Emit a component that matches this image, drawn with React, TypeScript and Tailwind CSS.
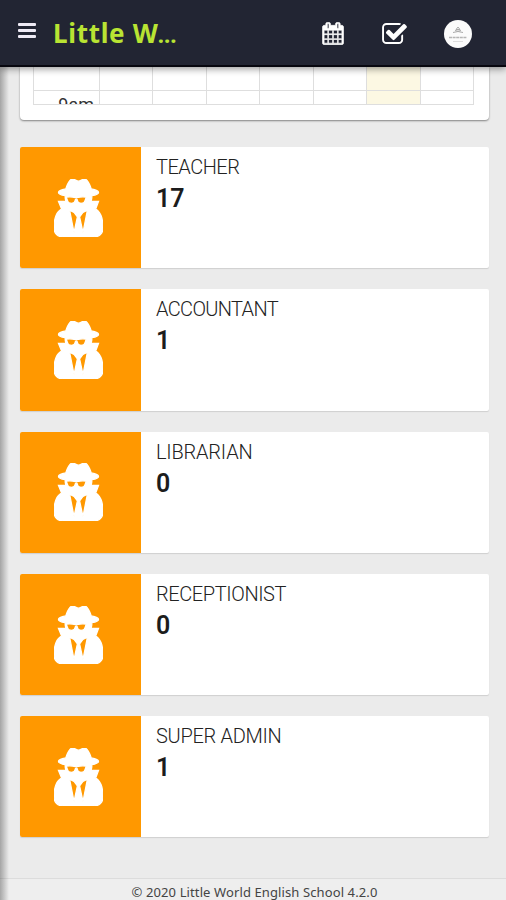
const stats = [
  { label: 'TEACHER', value: 17, tracking: 'tracking-[-0.5px]' },
  { label: 'ACCOUNTANT', value: 1, tracking: 'tracking-[-0.65px]' },
  { label: 'LIBRARIAN', value: 0, tracking: 'tracking-[-0.2px]' },
  { label: 'RECEPTIONIST', value: 0, tracking: 'tracking-[-0.4px]' },
  { label: 'SUPER ADMIN', value: 1, tracking: 'tracking-[-0.3px]' },
];

// all-day column first, then Sun–Sat; index 6 is today
const columns = [0, 1, 2, 3, 4, 5, 6, 7];
const today = 6;

function CalendarIcon() {
  return (
    <svg
      viewBox="44 -10 1704 1822"
      width="22"
      height="23"
      fill="currentColor"
      stroke="currentColor"
      strokeWidth="50"
      aria-hidden="true"
    >
      <path d="M192 1664h288v-288h-288v288zm352 0h320v-288h-320v288zm-352-352h288v-320h-288v320zm352 0h320v-320h-320v320zm-352-384h288v-288h-288v288zm736 736h320v-288h-320v288zm-384-736h320v-288h-320v288zm768 736h288v-288h-288v288zm-384-352h320v-320h-320v320zm-352-864v-288q0-13-9.5-22.5t-22.5-9.5h-64q-13 0-22.5 9.5t-9.5 22.5v288q0 13 9.5 22.5t22.5 9.5h64q13 0 22.5-9.5t9.5-22.5zm736 864h288v-320h-288v320zm-384-384h320v-288h-320v288zm384 0h288v-288h-288v288zm32-480v-288q0-13-9.5-22.5t-22.5-9.5h-64q-13 0-22.5 9.5t-9.5 22.5v288q0 13 9.5 22.5t22.5 9.5h64q13 0 22.5-9.5t9.5-22.5zm384-64v1280q0 52-38 90t-90 38h-1408q-52 0-90-38t-38-90v-1280q0-52 38-90t90-38h128v-96q0-66 47-113t113-47h64q66 0 113 47t47 113v96h384v-96q0-66 47-113t113-47h64q66 0 113 47t47 113v96h128q52 0 90 38t38 90z" />
    </svg>
  );
}

function CheckIcon() {
  return (
    <svg viewBox="64 128 1663 1408" width="25" height="21" fill="currentColor" aria-hidden="true">
      <path d="M1472 930v318q0 119-84.5 203.5t-203.5 84.5h-832q-119 0-203.5-84.5t-84.5-203.5v-832q0-119 84.5-203.5t203.5-84.5h832q63 0 117 25 15 7 18 23 3 17-9 29l-49 49q-10 10-23 10-3 0-9-2-23-6-45-6h-832q-66 0-113 47t-47 113v832q0 66 47 113t113 47h832q66 0 113-47t47-113v-254q0-13 9-22l64-64q10-10 23-10 6 0 12 3 20 8 20 29zm231-489l-814 814q-24 24-57 24t-57-24l-430-430q-24-24-24-57t24-57l110-110q24-24 57-24t57 24l263 263 647-647q24-24 57-24t57 24l110 110q24 24 24 57t-24 57z" />
    </svg>
  );
}

function SecretIcon() {
  return (
    <svg viewBox="256 0 1408 1664" width="49" height="58" fill="currentColor" aria-hidden="true">
      <path d="M832 1536l96-448-96-128-128-64zm256 0l128-640-128 64-96 128zm96-1010q-2-4-4-6-10-8-96-8-70 0-167 19-7 2-21 2t-21-2q-97-19-167-19-86 0-96 8-2 2-4 6 2 18 4 27 2 3 7.5 6.5t7.5 10.5q2 4 7.5 20.5t7 20.5 7.5 17 8.5 17 9 14 12 13.5 14 9.5 17.5 8 20.5 4 24.5 2q36 0 59-12.5t32.5-30 14.5-34.5 11.5-29.5 17.5-12.5h12q11 0 17.5 12.5t11.5 29.5 14.5 34.5 32.5 30 59 12.5q13 0 24.5-2t20.5-4 17.5-8 14-9.5 12-13.5 9-14 8.5-17 7.5-17 7-20.5 7.5-20.5q2-7 7.5-10.5t7.5-6.5q2-9 4-27zm480 879q0 121-73 190t-194 69h-874q-121 0-194-69t-73-190q0-61 4.5-118t19-125.5 37.5-123.5 63.5-103.5 93.5-74.5l-90-220h214q-22-64-22-128 0-12 2-32-194-40-194-96 0-57 210-99 17-62 51.5-134t70.5-114q32-37 76-37 30 0 84 31t84 31 84-31 84-31q44 0 76 37 36 42 70.5 114t51.5 134q210 42 210 99 0 56-194 96 7 81-20 160h214l-82 225q63 33 107.5 96.5t65.5 143.5 29 151.5 8 148.5z" stroke="currentColor" strokeWidth="36" />
    </svg>
  );
}

function Avatar() {
  return (
    <svg viewBox="0 0 28 28" width="28" height="28" aria-hidden="true">
      <circle cx="14" cy="14" r="14" fill="#fbfbfb" />
      <path d="M9 12.500q5-2 10 0M11 10.500q3 1.500 6 0M14 7l-2 2.500h4z" fill="none" stroke="#aaa" strokeWidth="1" />
      <path d="M5 17.500h18" stroke="#b5b5b5" strokeWidth="1.300" strokeDasharray="3 .6" />
      <path d="M9 21.500h10" stroke="#ddd" strokeWidth="1" />
    </svg>
  );
}

export default function App() {
  return (
    <div className="relative flex h-[900px] w-full max-w-[506px] flex-col overflow-hidden bg-[#ebebeb] font-['Roboto',sans-serif]">
      {/* Top bar */}
      <header className="z-10 flex h-[67px] shrink-0 items-start border-b-2 border-[#07070f] bg-[#222533] text-white shadow-[0_2px_7px_rgba(0,0,0,0.4)]">
        <button className="mt-[23px] ml-[18px] flex w-[18px] flex-col gap-[3px]" aria-label="Menu">
          <span className="h-[3px] w-full rounded-[1px] bg-[#eeeaf5]" />
          <span className="h-[3px] w-full rounded-[1px] bg-[#eeeaf5]" />
          <span className="h-[3px] w-full rounded-[1px] bg-[#eeeaf5]" />
        </button>
        <h1 className="mt-[15px] ml-[17px] w-[150px] font-['Noto_Sans',sans-serif] text-[26px] leading-[36px] font-bold tracking-[0.7px] whitespace-nowrap text-[#b9e433]">
          Little W<span className="-ml-px text-[22px] tracking-normal">…</span>
        </h1>
        <div className="mt-[22px] ml-[119px]">
          <CalendarIcon />
        </div>
        <div className="mt-[23px] ml-[38px]">
          <CheckIcon />
        </div>
        <div className="mt-[20px] ml-[37px]">
          <Avatar />
        </div>
      </header>

      {/* Bottom of the calendar card, scrolled under the bar */}
      <section className="mr-[17px] ml-5 h-[53px] shrink-0 rounded-b-[4px] bg-white pr-[15px] pl-[13px] shadow-[0_1px_2px_rgba(0,0,0,0.45)]">
        <div className="grid h-[38px] grid-cols-[66px_repeat(7,1fr)] grid-rows-[24px_14px] overflow-hidden border-b border-l border-[#dedede]">
          {columns.map((c) => (
            <div
              key={c}
              className={c === today ? 'border-r border-b border-[#dedede] bg-[#fcf8e3]' : 'border-r border-b border-[#dedede]'}
            />
          ))}
          {columns.map((c) => (
            <div
              key={c}
              className={
                c === today
                  ? 'h-[14px] overflow-hidden border-r border-[#dedede] bg-[#fcf8e3]'
                  : 'h-[14px] overflow-hidden border-r border-[#dedede]'
              }
            >
              {c === 0 && (
                <span className="block pt-[4px] pr-[5px] text-right text-[18px] leading-[20px] text-[#333]">9am</span>
              )}
            </div>
          ))}
        </div>
      </section>

      {/* Stat cards */}
      <main className="mt-[27px] mr-[17px] ml-5 flex flex-col gap-[21px]">
        {stats.map((s) => (
          <div
            key={s.label}
            className="flex h-[121.300px] overflow-hidden rounded-[2px] bg-white shadow-[0_1px_1px_rgba(0,0,0,0.12)]"
          >
            <div className="flex w-[121px] shrink-0 items-center justify-center bg-[#ff9800] pr-[4px] text-white">
              <SecretIcon />
            </div>
            <div className="pt-[8px] pl-[15px]">
              <p className={`text-[20px] leading-[25px] font-light text-[#222] ${s.tracking}`}>{s.label}</p>
              <p className="mt-[3px] text-[25px] leading-[32px] font-semibold text-[#1c1c1c]">{s.value}</p>
            </div>
          </div>
        ))}
      </main>

      <footer className="mt-auto h-[22px] shrink-0 border-t border-[#dcdcdc] bg-[#eeeeee] pl-[3px] text-center font-['Noto_Sans',sans-serif] text-[13px] leading-[27px] tracking-[0.11px] whitespace-nowrap text-[#444]">
        © 2020 Little World English School 4.2.0
      </footer>

      {/* Shadow cast by the collapsed sidebar */}
      <div className="pointer-events-none absolute top-[67px] bottom-0 left-0 w-[9px] bg-linear-to-r from-black/30 to-transparent" />
    </div>
  );
}
